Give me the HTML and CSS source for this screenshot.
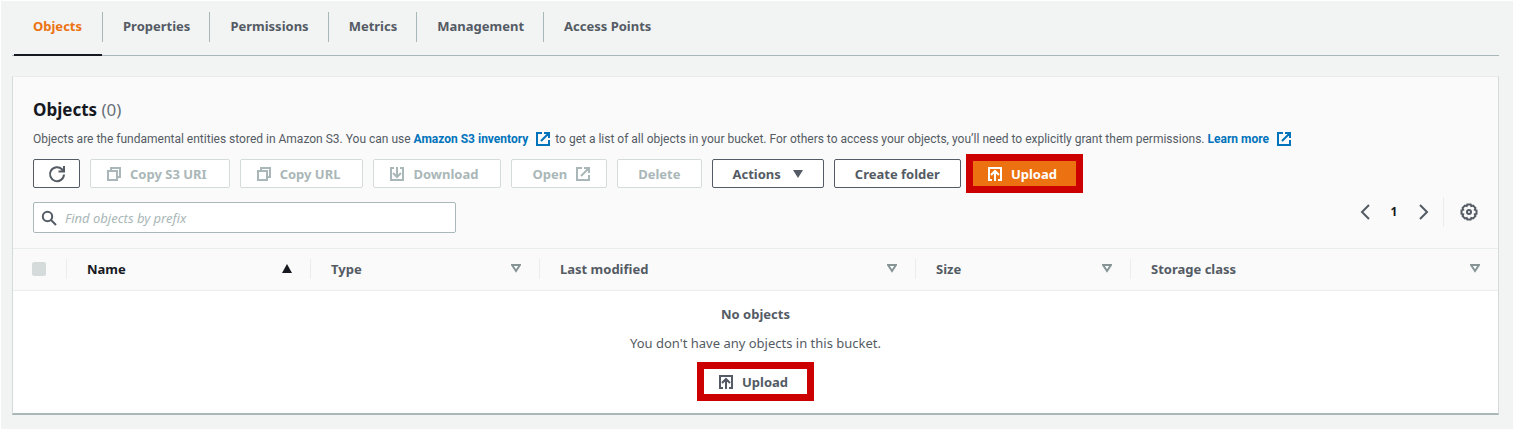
FILE: index.html
```html
<!DOCTYPE html>
<html lang="en">
<head>
<meta charset="utf-8">
<title>Objects</title>
<link rel="stylesheet" href="styles.css">
</head>
<body>
<svg class="sprite" aria-hidden="true">
  <symbol id="external" viewBox="0 0 16 16"><path d="M7 2H2v12h12V9M9 2h5v5M6 10l8-8"/></symbol>
  <symbol id="copy" viewBox="0 0 16 16"><path d="M2 5h9v9H2zM5 5V2h9v9h-3"/></symbol>
  <symbol id="download" viewBox="0 0 16 16"><path d="M5 2H2v12h12V2h-3M8 1v9M4 7l4 4 4-4"/></symbol>
  <symbol id="upload" viewBox="0 0 16 16"><path d="M5 14H2V2h12v12h-3M8 15V6M4 9l4-4 4 4"/></symbol>
  <symbol id="sort" viewBox="0 0 10 9"><path d="M1 1h8L5 7z"/></symbol>
</svg>
<main class="page">
  <nav class="tabs">
    <a class="tab active" href="#objects">Objects</a>
    <a class="tab" href="#properties">Properties</a>
    <a class="tab" href="#permissions">Permissions</a>
    <a class="tab" href="#metrics">Metrics</a>
    <a class="tab" href="#management">Management</a>
    <a class="tab" href="#access">Access Points</a>
  </nav>
  <section class="panel">
    <header class="panel-head">
      <h1 class="title">Objects <span class="count">(0)</span></h1>
      <p class="description">Objects are the fundamental entities stored in Amazon S3. You can use <a class="link" href="#inventory">Amazon S3 inventory <svg class="icon"><use href="#external"/></svg></a> to get a list of all objects in your bucket. For others to access your objects, you’ll need to explicitly grant them permissions. <a class="link" href="#learn">Learn more <svg class="icon"><use href="#external"/></svg></a></p>
      <div class="actions">
        <button class="btn refresh" aria-label="Refresh"><svg class="icon large" viewBox="0 0 18 18"><path d="M16 9.500A7 7 0 1 1 14 4.300L16 6.200M16 1v5.500h-5.500"/></svg></button>
        <button class="btn" disabled><svg class="icon"><use href="#copy"/></svg>Copy S3 URI</button>
        <button class="btn" disabled><svg class="icon"><use href="#copy"/></svg>Copy URL</button>
        <button class="btn" disabled><svg class="icon"><use href="#download"/></svg>Download</button>
        <button class="btn trailing" disabled>Open<svg class="icon"><use href="#external"/></svg></button>
        <button class="btn wide" disabled>Delete</button>
        <button class="btn wide">Actions<svg class="caret" viewBox="0 0 10 8"><path d="M0 0h10L5 8z"/></svg></button>
        <button class="btn wide">Create folder</button>
        <span class="highlight"><button class="btn primary"><svg class="icon"><use href="#upload"/></svg>Upload</button></span>
      </div>
      <div class="filter-row">
        <label class="search">
          <svg class="icon" viewBox="0 0 16 16"><circle cx="6.500" cy="6.500" r="4.700"/><path d="M10 10l5 5"/></svg>
          <input class="search-input" type="text" aria-label="Find objects by prefix" placeholder="Find objects by prefix">
        </label>
        <div class="pager">
          <button class="plain" aria-label="Previous page"><svg class="icon" viewBox="0 0 16 16"><path d="M12 1L5 8l7 7"/></svg></button>
          <span class="page-number">1</span>
          <button class="plain" aria-label="Next page"><svg class="icon" viewBox="0 0 16 16"><path d="M5 1l7 7-7 7"/></svg></button>
          <span class="divider"></span>
          <button class="plain" aria-label="Preferences"><svg class="icon gear" viewBox="0 0 18 18"><path d="M7.300 1.500h3.400l.6 1.600 1.800-.5 2.300 2.300-.6 1.800 1.700.6v3.400l-1.700.6.6 1.800-2.300 2.300-1.800-.5-.6 1.600H7.300l-.6-1.600-1.800.5-2.300-2.300.6-1.800-1.700-.6V7.300l1.700-.6-.6-1.800 2.300-2.300 1.800.5z"/><circle cx="9" cy="9" r="2"/></svg></button>
        </div>
      </div>
    </header>
    <table class="table">
      <colgroup><col class="c-check"><col class="c-name"><col class="c-type"><col class="c-modified"><col class="c-size"><col></colgroup>
      <thead>
        <tr>
          <th class="check-cell"><input class="check" type="checkbox" aria-label="Select all objects" disabled></th>
          <th><div class="cell sorted">Name<svg class="sort" viewBox="0 0 10 9"><path class="solid" d="M0 9h10L5 0z"/></svg></div></th>
          <th><div class="cell">Type<svg class="sort"><use href="#sort"/></svg></div></th>
          <th><div class="cell">Last modified<svg class="sort"><use href="#sort"/></svg></div></th>
          <th><div class="cell">Size<svg class="sort"><use href="#sort"/></svg></div></th>
          <th><div class="cell">Storage class<svg class="sort"><use href="#sort"/></svg></div></th>
        </tr>
      </thead>
      <tbody>
        <tr><td colspan="6">
          <div class="empty">
            <strong>No objects</strong>
            <span>You don't have any objects in this bucket.</span>
            <span class="highlight"><button class="btn"><svg class="icon"><use href="#upload"/></svg>Upload</button></span>
          </div>
        </td></tr>
      </tbody>
    </table>
  </section>
</main>
</body>
</html>
```
FILE: styles.css
```css
* { box-sizing: border-box; }
body {
  margin: 0;
  background: #fff;
  color: #545b64;
  font: 13px/20px "Noto Sans", sans-serif;
}
.sprite { position: absolute; width: 0; height: 0; }
.page {
  margin: 1px 0 0 1px;
  padding: 0 14px 14px 11px;
  background: #f2f3f3;
}
.tabs {
  display: flex;
  height: 55px;
  padding-top: 11px;
  border-bottom: 1px solid #aab7b8;
}
.tab {
  position: relative;
  height: 30px;
  padding: 4px 19px 4px 20px;
  border-right: 1px solid #aab7b8;
  color: #545b64;
  font-weight: 700;
  text-decoration: none;
}
.tab:last-child { border-right: 0; }
.tab.active { padding-left: 21px; padding-right: 20px; color: #ec7211; }
.tab.active::after {
  content: "";
  position: absolute;
  left: 2px;
  right: 0;
  bottom: -14px;
  height: 2px;
  background: #16191f;
}
.panel {
  margin-top: 20px;
  background: #fff;
  border: 1px solid #d5dbdb;
  border-top-color: #eaeded;
  border-bottom: 2px solid #aab7b8;
}
.panel-head { padding: 22px 21px 15px 20px; background: #fafafa; }
.title {
  margin: 0;
  color: #16191f;
  font-size: 17px;
  line-height: 22px;
}
.count { color: #687078; font-weight: 400; }
.description { margin: 8px 0 10px; font-family: Roboto, sans-serif; font-size: 12px; }
.link { color: #0073bb; font-weight: 700; text-decoration: none; }
.link .icon { margin: 0 1px 0 4px; }
.icon {
  width: 16px;
  height: 16px;
  flex: none;
  fill: none;
  stroke: currentColor;
  stroke-width: 2;
  vertical-align: -4px;
}
.icon.large, .icon.gear { width: 18px; height: 18px; }
.icon.gear { margin: 0 -1px; }
.actions { display: flex; align-items: center; gap: 10px; height: 29px; }
.btn {
  display: flex;
  align-items: center;
  gap: 8px;
  height: 29px;
  padding: 0 22px 0 15px;
  border: 1px solid #545b64;
  border-radius: 2px;
  background: #fff;
  color: #545b64;
  font: 700 13px/20px "Noto Sans", sans-serif;
  white-space: nowrap;
}
.btn.wide { padding: 0 20px; }
.btn.trailing { padding: 0 15px 0 20px; }
.btn.refresh { padding: 0 13px 0 14px; }
.btn:disabled { border-color: #d5dbdb; color: #aab7b8; }
.caret { width: 10px; height: 8px; margin-left: 4px; fill: currentColor; }
.highlight { display: flex; border: 7px solid #c00; }
.actions .highlight { margin-left: -5px; }
.highlight .btn { height: 25px; padding: 0 19px 0 14px; border: 0; border-radius: 0; }
.btn.primary { background: #ec7211; color: #fff; }
.filter-row { display: flex; justify-content: space-between; margin-top: 14px; }
.search {
  display: flex;
  align-items: center;
  gap: 8px;
  width: 423px;
  height: 31px;
  padding: 0 7px;
  border: 1px solid #aab7b8;
  border-radius: 2px;
  background: #fff;
}
.search-input {
  flex: 1;
  min-width: 0;
  padding: 0;
  border: 0;
  outline: 0;
  background: none;
  font: 13px/20px "Noto Sans", sans-serif;
}
.search-input::placeholder { color: #aab7b8; font-style: italic; opacity: 1; }
.pager { display: flex; align-items: center; height: 20px; }
.plain { display: flex; padding: 0; border: 0; background: none; color: #545b64; }
.page-number { width: 42px; color: #16191f; font-size: 12px; font-weight: 700; text-align: center; }
.divider { width: 1px; height: 30px; margin: 0 17px 0 12px; background: #eaeded; }
.table { width: 100%; border-collapse: collapse; table-layout: fixed; }
.c-check { width: 53px; }
.c-name { width: 244px; }
.c-type { width: 229px; }
.c-modified { width: 376px; }
.c-size { width: 215px; }
th {
  height: 42px;
  padding: 0 0 2px;
  border: solid #eaeded;
  border-width: 1px 0;
  background: #fafafa;
  text-align: left;
}
td { padding: 0; }
.check-cell { padding-left: 19px; }
.check {
  display: block;
  width: 14px;
  height: 14px;
  margin: 0;
  appearance: none;
  border-radius: 2px;
  background: #d5dbdb;
}
.cell {
  display: flex;
  align-items: center;
  justify-content: space-between;
  padding: 0 18px 0 20px;
  border-left: 1px solid #eaeded;
}
.sorted { color: #16191f; }
.sort { width: 10px; height: 9px; fill: none; stroke: #879596; stroke-width: 2; }
.solid { fill: #16191f; stroke: none; }
.empty {
  display: flex;
  flex-direction: column;
  align-items: center;
  gap: 9px;
  padding: 13px 0 12px;
}
```
